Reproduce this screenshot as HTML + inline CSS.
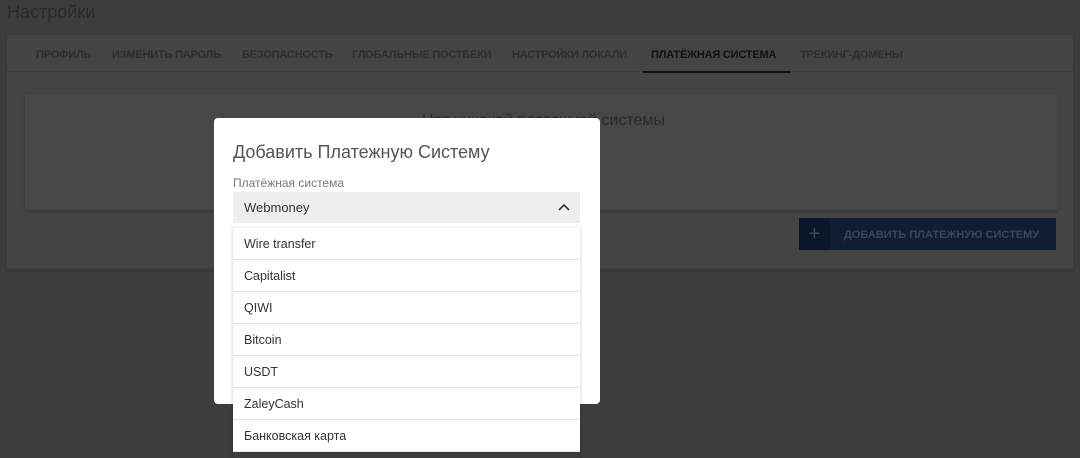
<!DOCTYPE html>
<html><head><meta charset="utf-8"><style>
*{box-sizing:border-box;margin:0;padding:0}
body{width:1080px;height:452px;overflow:hidden;background:#3d3d3d;font-family:"Liberation Sans",sans-serif;position:relative}
.a{position:absolute}
.h1{left:7px;top:2px;font-size:18px;color:#2a2a2a}
.card{left:7px;top:35px;width:1066px;height:234px;background:#444;box-shadow:0 1px 2px rgba(0,0,0,.2)}
.tabs{left:7px;top:35px;width:1066px;height:37px;border-bottom:1px solid #3c3c3c}
.tab{position:absolute;top:49px;font-size:11px;font-weight:bold;color:#2e2e2e;white-space:nowrap;letter-spacing:-0.2px}
.inner{left:25px;top:94px;width:1033px;height:116px;background:#474747;box-shadow:0 1px 3px rgba(0,0,0,.25)}
.btn{left:799px;top:218px;width:257px;height:32px;background:#0f1e33}
.modal{left:214px;top:118px;width:386px;height:286px;background:#fff;border-radius:4px}
.item{position:absolute;left:233px;width:347px;height:32px;background:#fff;border-bottom:1px solid #e4e4e4;font-size:12.5px;color:#333;padding-left:11px;line-height:33px}
</style></head><body>
<div class="a h1">Настройки</div>
<div class="a card"></div>
<div class="a tabs"></div>
<div class="tab" style="left:36px">ПРОФИЛЬ</div>
<div class="tab" style="left:112px">ИЗМЕНИТЬ ПАРОЛЬ</div>
<div class="tab" style="left:242px">БЕЗОПАСНОСТЬ</div>
<div class="tab" style="left:352px">ГЛОБАЛЬНЫЕ ПОСТБЕКИ</div>
<div class="tab" style="left:512px">НАСТРОЙКИ ЛОКАЛИ</div>
<div class="tab" style="left:651px;color:#111">ПЛАТЁЖНАЯ СИСТЕМА</div>
<div class="a" style="left:643px;top:71px;width:148px;height:2px;background:#111"></div>
<div class="tab" style="left:800px">ТРЕКИНГ-ДОМЕНЫ</div>
<div class="a inner"></div>
<div class="a" style="left:422px;top:112px;font-size:16px;color:#2a2a2a">Нет никакой платежной системы</div>
<div class="a btn"><div class="a" style="left:0;top:0;width:31px;height:32px;background:#0b1728;color:#3a4a5e;font-size:20px;text-align:center;line-height:32px">+</div><div class="a" style="left:45px;top:11px;font-size:11px;font-weight:bold;color:#3a4658;white-space:nowrap">ДОБАВИТЬ ПЛАТЕЖНУЮ СИСТЕМУ</div></div>
<div class="a modal"></div>
<div class="a" style="left:233px;top:142px;font-size:18px;color:#555">Добавить Платежную Систему</div>
<div class="a" style="left:233px;top:176px;font-size:12px;color:#777">Платёжная система</div>
<div class="a" style="left:233px;top:192px;width:347px;height:31px;background:#eeeeef"></div>
<div class="a" style="left:244px;top:200px;font-size:13px;color:#333">Webmoney</div>
<svg class="a" style="left:557px;top:202px" width="14" height="10"><path d="M2 8 L7 3 L12 8" stroke="#333" stroke-width="1.6" fill="none"/></svg>
<div class="a" style="left:233px;top:228px;width:347px;height:230px;box-shadow:0 1px 4px rgba(0,0,0,.2)"></div>
<div class="item" style="top:228px">Wire transfer</div>
<div class="item" style="top:260px">Capitalist</div>
<div class="item" style="top:292px">QIWI</div>
<div class="item" style="top:324px">Bitcoin</div>
<div class="item" style="top:356px">USDT</div>
<div class="item" style="top:388px">ZaleyCash</div>
<div class="item" style="top:420px">Банковская карта</div>
</body></html>
